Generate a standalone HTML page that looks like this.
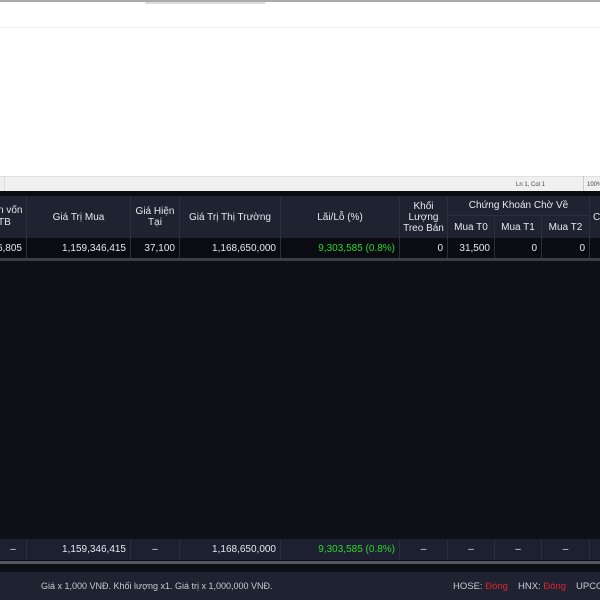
<!DOCTYPE html>
<html><head><meta charset="utf-8"><style>
*{margin:0;padding:0;box-sizing:border-box}
body{width:600px;height:600px;overflow:hidden;background:#fff;font-family:"Liberation Sans",sans-serif;position:relative}
.a{position:absolute}
.c{position:absolute;display:flex;align-items:center;justify-content:center;text-align:center;color:#e6e8ee;font-size:10px;line-height:11px;border-right:1px solid #2a2f3d;overflow:hidden}
.r{justify-content:flex-end;padding-right:4px}
.g{color:#2bd62b}
</style></head><body>
<div class="a" style="top:0;left:0;width:600px;height:2px;background:#aaa"></div>
<div class="a" style="top:2px;left:145px;width:120px;height:2px;background:#ddd"></div>
<div class="a" style="top:27px;left:0;width:600px;height:1px;background:#eee"></div>
<div class="a" style="top:176px;left:0;width:600px;height:15px;background:#f0f0f0;border-top:1px solid #e0e0e0"></div>
<div class="a" style="top:176px;left:4px;width:1px;height:15px;background:#ddd"></div>
<div class="a" style="top:182px;left:516px;font-size:6px;color:#444">Ln 1, Col 1</div>
<div class="a" style="top:182px;left:587px;font-size:6px;color:#444">100%</div>
<div class="a" style="top:176px;left:583px;width:1px;height:15px;background:#ccc"></div>
<div class="a" style="top:191px;left:0;width:600px;height:409px;background:#0e1017"></div>
<div class="a" style="top:191px;left:0;width:600px;height:5px;background:#0a0c12"></div>
<!-- header -->
<div class="a" style="top:196px;left:0;width:600px;height:42px;background:#1e2231"></div>
<div class="c" style="top:196px;left:0;width:27px;height:42px"></div>
<div class="a" style="top:205px;left:-2px;font-size:10px;color:#e6e8ee;white-space:nowrap">n vốn</div>
<div class="a" style="top:217px;left:-2px;font-size:10px;color:#e6e8ee;white-space:nowrap">TB</div>
<div class="c" style="top:196px;left:27px;width:104px;height:42px">Giá Trị Mua</div>
<div class="c" style="top:196px;left:131px;width:49px;height:42px">Giá Hiện<br>Tại</div>
<div class="c" style="top:196px;left:180px;width:101px;height:42px">Giá Trị Thị Trường</div>
<div class="c" style="top:196px;left:281px;width:119px;height:42px">Lãi/Lỗ (%)</div>
<div class="c" style="top:196px;left:400px;width:48px;height:42px">Khối<br>Lượng<br>Treo Bán</div>
<div class="c" style="top:196px;left:448px;width:142px;height:20px;border-bottom:1px solid #2a2f3d">Chứng Khoán Chờ Về</div>
<div class="c" style="top:216px;left:448px;width:47px;height:22px">Mua T0</div>
<div class="c" style="top:216px;left:495px;width:47px;height:22px">Mua T1</div>
<div class="c" style="top:216px;left:542px;width:48px;height:22px">Mua T2</div>
<div class="c" style="top:196px;left:590px;width:12px;height:42px;justify-content:flex-start;padding-left:3px;border:none">C</div>
<!-- row -->
<div class="a" style="top:238px;left:0;width:600px;height:20px;background:#0a0c12"></div>
<div class="c r" style="top:238px;left:0;width:27px;height:20px">6,805</div>
<div class="c r" style="top:238px;left:27px;width:104px;height:20px">1,159,346,415</div>
<div class="c r" style="top:238px;left:131px;width:49px;height:20px">37,100</div>
<div class="c r" style="top:238px;left:180px;width:101px;height:20px">1,168,650,000</div>
<div class="c r g" style="top:238px;left:281px;width:119px;height:20px">9,303,585 (0.8%)</div>
<div class="c r" style="top:238px;left:400px;width:48px;height:20px">0</div>
<div class="c r" style="top:238px;left:448px;width:47px;height:20px">31,500</div>
<div class="c r" style="top:238px;left:495px;width:47px;height:20px">0</div>
<div class="c r" style="top:238px;left:542px;width:48px;height:20px">0</div>
<div class="a" style="top:258px;left:0;width:600px;height:3px;background:#3c3f48"></div>
<!-- total -->
<div class="a" style="top:539px;left:0;width:600px;height:21px;background:#1c2030"></div>
<div class="c" style="top:539px;left:0;width:27px;height:21px">–</div>
<div class="c r" style="top:539px;left:27px;width:104px;height:21px">1,159,346,415</div>
<div class="c" style="top:539px;left:131px;width:49px;height:21px">–</div>
<div class="c r" style="top:539px;left:180px;width:101px;height:21px">1,168,650,000</div>
<div class="c r g" style="top:539px;left:281px;width:119px;height:21px">9,303,585 (0.8%)</div>
<div class="c" style="top:539px;left:400px;width:48px;height:21px">–</div>
<div class="c" style="top:539px;left:448px;width:47px;height:21px">–</div>
<div class="c" style="top:539px;left:495px;width:47px;height:21px">–</div>
<div class="c" style="top:539px;left:542px;width:48px;height:21px">–</div>
<div class="a" style="top:561px;left:0;width:600px;height:3px;background:#55575e"></div>
<!-- footer -->
<div class="a" style="top:572px;left:0;width:600px;height:28px;background:#1e2231"></div>
<div class="a" style="top:581px;left:41px;font-size:9px;color:#c8cad0;white-space:nowrap">Giá x 1,000 VNĐ. Khối lượng x1. Giá trị x 1,000,000 VNĐ.</div>
<div class="a" style="top:581px;left:453px;font-size:9.5px;color:#c8cad0;white-space:nowrap">HOSE: <span style="color:#e0242c">Đóng</span></div>
<div class="a" style="top:581px;left:518px;font-size:9.5px;color:#c8cad0;white-space:nowrap">HNX: <span style="color:#e0242c">Đóng</span></div>
<div class="a" style="top:581px;left:576px;font-size:9.5px;color:#c8cad0;white-space:nowrap">UPCOM</div>
</body></html>
